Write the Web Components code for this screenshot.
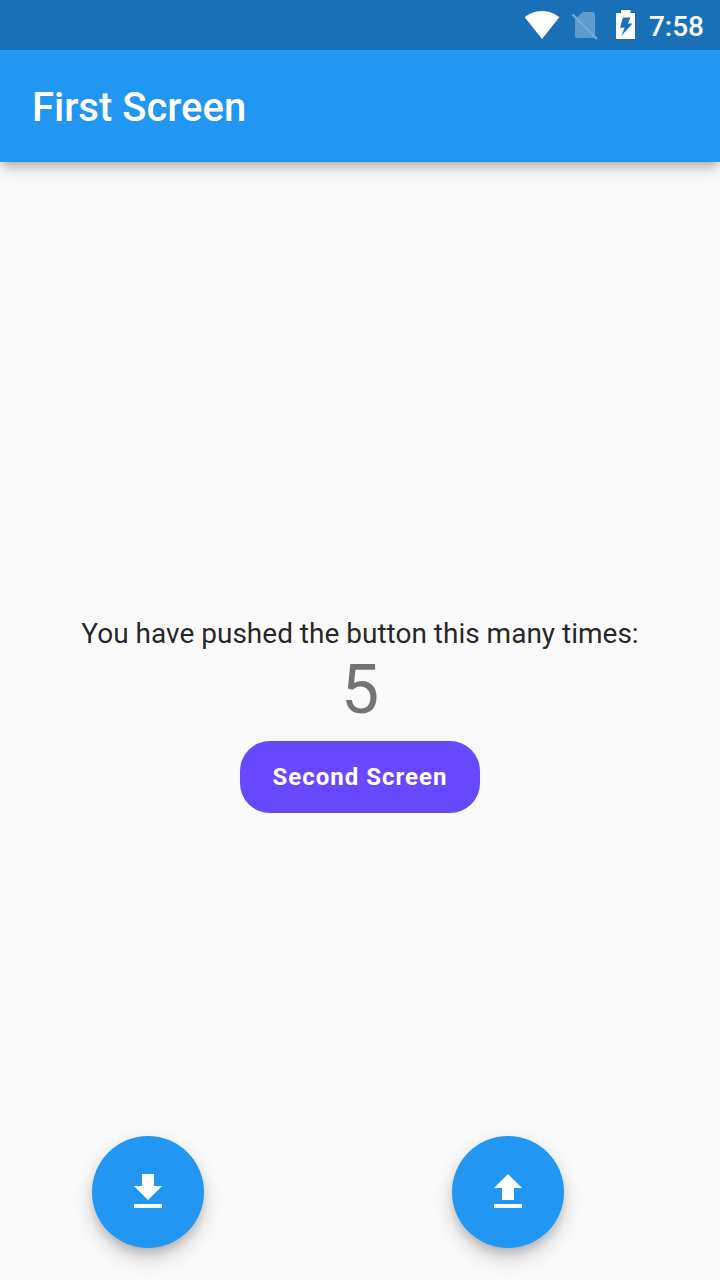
<!DOCTYPE html>
<html lang="en">
<head>
<meta charset="utf-8">
<meta name="viewport" content="width=device-width, initial-scale=1">
<title>First Screen</title>
<style>
  html, body { margin: 0; height: 100%; }
  body { font-family: Roboto, "Liberation Sans", sans-serif; background: #fafafa; }
</style>
</head>
<body>
<app-screen>
  <status-bar slot="top">7:58</status-bar>
  <app-bar slot="top">First Screen</app-bar>
  <push-counter value="5">You have pushed the button this many times:</push-counter>
  <round-action slot="actions" icon="down" label="Decrease"></round-action>
  <round-action slot="actions" icon="up" label="Increase"></round-action>
</app-screen>
<script>
class AppScreen extends HTMLElement {
  constructor() {
    super();
    this.attachShadow({ mode: "open" }).innerHTML = `
      <style>
        :host { display: flex; flex-direction: column; min-height: 100%; position: relative; }
        header { display: block; }
        main { flex: 1; display: flex; align-items: center; justify-content: center; }
        footer {
          position: absolute; left: 0; right: 0; bottom: 32px;
          display: grid; grid-template-columns: 1fr 1fr;
        }
        footer ::slotted(*) { margin-left: 92px; }
      </style>
      <header><slot name="top"></slot></header>
      <main><slot></slot></main>
      <footer><slot name="actions"></slot></footer>`;
  }
}

class StatusBar extends HTMLElement {
  constructor() {
    super();
    this.attachShadow({ mode: "open" }).innerHTML = `
      <style>
        :host {
          display: flex; align-items: center; justify-content: flex-end;
          position: relative; z-index: 1;
          height: 50px; padding-right: 16px; box-sizing: border-box;
          background: #1a70b7; color: #fff;
          font-size: 28px; line-height: 32px; font-weight: 500;
        }
        svg { display: block; fill: #fff; }
        .wifi { margin-right: 10px; }
        .sim { margin-right: 16px; }
        .battery { margin-right: 13px; }
        .time { padding-top: 4px; }
      </style>
      <svg class="wifi" width="36" height="30" viewBox="0 0 36 30" aria-hidden="true">
        <path d="M18 29 .7 7.2C4.600 4 10.600 1 18 1s13.400 3 17.300 6.200Z"/>
      </svg>
      <svg class="sim" width="30" height="30" viewBox="0 0 30 30" aria-hidden="true">
        <path fill-opacity=".3" d="M12.500 2H23a2 2 0 0 1 2 2v22a2 2 0 0 1-2 2H7a2 2 0 0 1-2-2V9.500Z"/>
        <path fill="none" stroke="#75a9d4" stroke-width="2.4" d="M2.600 4.500 27 29"/>
      </svg>
      <svg class="battery" width="20" height="30" viewBox="0 0 20 30" aria-hidden="true">
        <path fill-rule="evenodd" d="M5 0h9.500v3H19v26H0V3h5ZM7 7.500 4 17.700h4.700L5.200 26 16.500 13.500h-4.700L14.500 7.500Z"/>
      </svg>
      <span class="time"><slot></slot></span>`;
  }
}

class AppBar extends HTMLElement {
  constructor() {
    super();
    this.attachShadow({ mode: "open" }).innerHTML = `
      <style>
        :host {
          display: flex; align-items: center; height: 112px; padding: 4px 32px 0; box-sizing: border-box;
          background: #2196f3; color: #fff;
          box-shadow: 0 4px 8px -2px rgba(0,0,0,.18), 0 8px 14px -1px rgba(0,0,0,.18);
        }
        h1 { margin: 0; font-size: 40px; line-height: 48px; font-weight: 500; }
      </style>
      <h1><slot></slot></h1>`;
  }
}

class PushCounter extends HTMLElement {
  constructor() {
    super();
    this.attachShadow({ mode: "open" }).innerHTML = `
      <style>
        :host { display: flex; flex-direction: column; align-items: center; text-align: center; }
        p { margin: 0; font-size: 28px; line-height: 34px; color: rgba(0,0,0,.87); }
        output { font-size: 68px; line-height: 78px; color: rgba(0,0,0,.54); }
        button {
          margin: 12px 0; padding: 0 32px; height: 72px; min-width: 240px;
          border: 0; border-radius: 30px; background: #6848ff; color: #fff;
          font: 700 24px/28px Roboto, "Liberation Sans", sans-serif; letter-spacing: 1px;
        }
      </style>
      <p id="caption"><slot></slot></p>
      <output aria-labelledby="caption"></output>
      <button type="button">Second Screen</button>`;
  }
  connectedCallback() {
    this.shadowRoot.querySelector("output").textContent = this.getAttribute("value");
  }
}

const ACTION_ICONS = {
  down: "M19 9h-4V3H9v6H5l7 7 7-7zM5 18v2h14v-2H5z",
  up: "M9 16h6v-6h4l-7-7-7 7h4zM5 18h14v2H5z"
};

class RoundAction extends HTMLElement {
  connectedCallback() {
    if (this.shadowRoot) return;
    this.attachShadow({ mode: "open" }).innerHTML = `
      <style>
        :host { display: block; }
        button {
          display: grid; place-items: center; width: 112px; height: 112px; padding: 0;
          border: 0; border-radius: 50%; background: #2196f3; color: #fff;
          box-shadow: 0 6px 10px -2px rgba(0,0,0,.16), 0 12px 20px rgba(0,0,0,.14), 0 2px 20px rgba(0,0,0,.05);
        }
        svg { display: block; fill: currentColor; }
      </style>
      <button type="button" aria-label="${this.getAttribute("label")}">
        <svg width="48" height="48" viewBox="0 0 24 24" aria-hidden="true"><path d="${ACTION_ICONS[this.getAttribute("icon")]}"/></svg>
      </button>`;
  }
}

customElements.define("app-screen", AppScreen);
customElements.define("status-bar", StatusBar);
customElements.define("app-bar", AppBar);
customElements.define("push-counter", PushCounter);
customElements.define("round-action", RoundAction);
</script>
</body>
</html>
